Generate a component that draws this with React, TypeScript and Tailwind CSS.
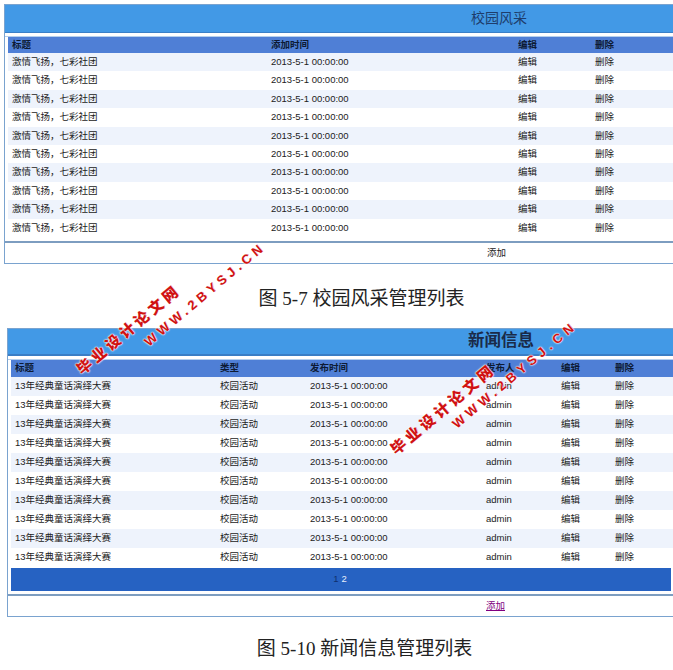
import React from "react";

const rows1 = Array.from({ length: 10 }, () => ({
  title: "激情飞扬，七彩社团",
  time: "2013-5-1 00:00:00",
}));

const rows2 = Array.from({ length: 10 }, () => ({
  title: "13年经典童话演绎大赛",
  type: "校园活动",
  time: "2013-5-1 00:00:00",
  user: "admin",
}));

const cjk = { fontFamily: '"Liberation Sans", "Noto Sans CJK SC", sans-serif' };
const serif = { fontFamily: '"Liberation Serif", "Noto Sans CJK SC", serif' };

function Watermark({ text, left, top, size, spacing, font }: { text: string; left: number; top: number; size: number; spacing: number; font: string }) {
  return (
    <span
      className="absolute whitespace-nowrap font-black text-[#d01212] leading-none origin-left -rotate-[40deg] [text-shadow:0_0_2px_#fff,0_0_2px_#fff,0_0_1px_#fff,0.4px_0_0_#d01212]"
      style={{ left, top, fontSize: size, letterSpacing: spacing, fontFamily: font }}
    >
      {text}
    </span>
  );
}

export default function App() {
  return (
    <div className="relative w-[673px] h-[670px] overflow-hidden bg-white text-[#222]" style={cjk}>
      {/* Panel 1 */}
      <div className="pt-[4px] pl-[4px]">
        <div className="w-[700px] border border-[#7aa3cf]">
          <div className="h-[28px] bg-[#4299e6] border-b border-[#3a80c8] flex items-center pl-[466px] text-[14px] text-[#1e3d6c]">
            校园风采
          </div>
          <div className="h-[4px] bg-white border-b border-[#b4cfee]" />
          <div className="pl-[3px]">
            <div className="h-[16px] bg-[#4f7fd6] flex items-center text-[9.5px] font-bold text-[#0d1a33]">
              <div className="w-[263px] pl-[4px]">标题</div>
              <div className="w-[247px]">添加时间</div>
              <div className="w-[77px]">编辑</div>
              <div>删除</div>
            </div>
            {rows1.map((r, i) => (
              <div
                key={i}
                className={`h-[18.4px] flex items-center text-[9.5px] ${i % 2 === 0 ? "bg-[#eef3fc]" : "bg-white"}`}
              >
                <div className="w-[263px] pl-[4px]">{r.title}</div>
                <div className="w-[247px]">{r.time}</div>
                <div className="w-[77px]">编辑</div>
                <div>删除</div>
              </div>
            ))}
          </div>
          <div className="h-[4px]" />
          <div className="h-[22px] border-t-2 border-[#7d9dc0] flex items-center pl-[482px] text-[9.5px]">
            添加
          </div>
        </div>
      </div>

      {/* Caption 1 */}
      <div className="h-[64px] pt-[6px] flex items-center justify-center pl-[50px] text-[19px] text-[#222]" style={serif}>
        图 5-7 校园风采管理列表
      </div>

      {/* Panel 2 */}
      <div className="pl-[7px]">
        <div className="w-[700px] border border-[#7aa3cf]">
          <div className="h-[27px] bg-[#4299e6] border-b-2 border-[#3a7ec6] flex items-center pl-[460px] text-[16.5px] font-bold text-[#1a2a48]" style={serif}>
            新闻信息
          </div>
          <div className="h-[4px] bg-white border-b border-[#b4cfee]" />
          <div className="pl-[3px]">
            <div className="h-[17px] bg-[#4f7fd6] flex items-center text-[9.5px] font-bold text-[#0d1a33]">
              <div className="w-[209px] pl-[4px]">标题</div>
              <div className="w-[90px]">类型</div>
              <div className="w-[176px]">发布时间</div>
              <div className="w-[75px]">发布人</div>
              <div className="w-[54px]">编辑</div>
              <div>删除</div>
            </div>
            {rows2.map((r, i) => (
              <div
                key={i}
                className={`h-[19px] flex items-center text-[9.5px] ${i % 2 === 0 ? "bg-[#eef3fc]" : "bg-white"}`}
              >
                <div className="w-[209px] pl-[4px]">{r.title}</div>
                <div className="w-[90px]">{r.type}</div>
                <div className="w-[176px]">{r.time}</div>
                <div className="w-[75px]">{r.user}</div>
                <div className="w-[54px]">编辑</div>
                <div>删除</div>
              </div>
            ))}
            <div className="w-[660px] h-[23px] mt-[1px] bg-[#2662c2] flex items-center justify-center text-[9.5px] pr-[2px]">
              <span className="text-[#0f2f6e]">1</span>
              <span className="ml-[3px] text-[#e6eefc]">2</span>
            </div>
          </div>
          <div className="h-[3px]" />
          <div className="h-[22px] border-t-2 border-[#7d9dc0] flex items-center pl-[478px] text-[9.5px]">
            <span className="text-[#800080] underline">添加</span>
          </div>
        </div>
      </div>

      {/* Caption 2 */}
      <div className="h-[60px] pt-[4px] flex items-center justify-center pl-[56px] text-[19px] text-[#222]" style={serif}>
        图 5-10 新闻信息管理列表
      </div>

      {/* Watermarks */}
      <Watermark text="毕业设计论文网" left={78} top={363} size={15} spacing={3.6} font='"Noto Sans CJK SC", sans-serif' />
      <Watermark text="WWW.2BYSJ.CN" left={146} top={337} size={13} spacing={4.2} font='"Liberation Sans", sans-serif' />
      <Watermark text="毕业设计论文网" left={392} top={443} size={15} spacing={3.8} font='"Noto Sans CJK SC", sans-serif' />
      <Watermark text="WWW.2BYSJ.CN" left={454} top={419} size={13} spacing={4.6} font='"Liberation Sans", sans-serif' />
    </div>
  );
}
